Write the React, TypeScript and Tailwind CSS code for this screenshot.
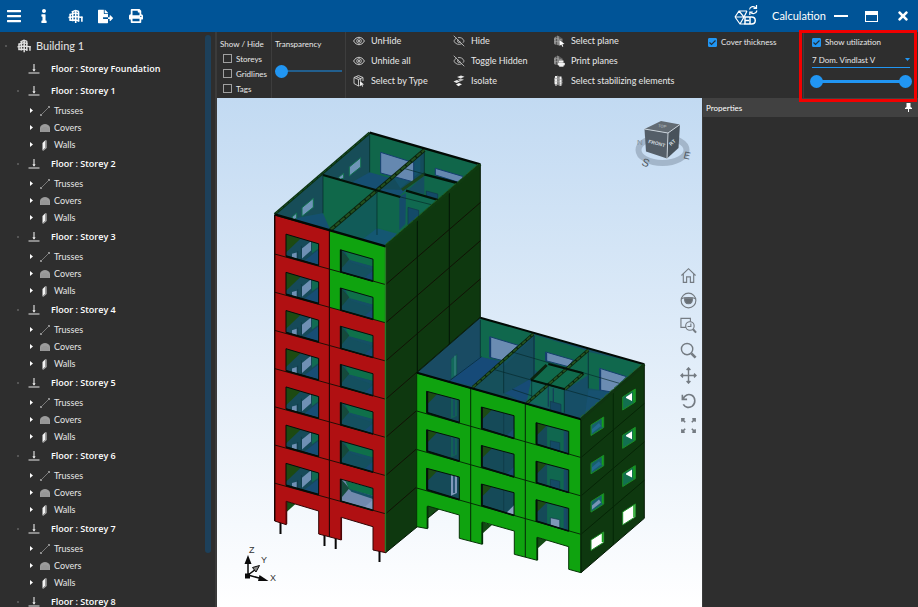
import { useState } from "react";
import type { ReactNode } from "react";
import { FaBars, FaInfo, FaFileExport, FaPrint, FaTimes } from "react-icons/fa";
import { EyeOff } from "lucide-react";

const storeys = [
  { name: "1", open: true },
  { name: "2", open: true },
  { name: "3", open: true },
  { name: "4", open: true },
  { name: "5", open: true },
  { name: "6", open: true },
  { name: "7", open: true },
  { name: "8", open: false },
];

/* ---------- small icons ---------- */

function BuildingIcon({ className = "" }: { className?: string }) {
  return (
    <svg className={className} viewBox="0 0 16 16" fill="none" stroke="currentColor">
      <path strokeWidth="1.7" d="M5 2.5v10.500M8.200 1v14M11.200 2.500v11M2.300 5v7M14.800 8v5.500" />
      <path strokeWidth="1.5" d="M2 6l6-1.800 4 1.300M.5 9l7.500-1 7.500 1M1.500 12l6.500-.3 4 1M4 3.2L8 1.500l3.500 1.200" />
    </svg>
  );
}

function FloorIcon() {
  return (
    <svg className="h-3 w-3" viewBox="0 0 12 12" stroke="#e8e8e8" fill="none">
      <path d="M6 1v7M.5 10h11" strokeWidth="1.1" />
      <path d="M4.800 6.500L6 8.300l1.200-1.800z" fill="#e8e8e8" strokeWidth=".5" />
    </svg>
  );
}

function TrussIcon() {
  return (
    <svg className="h-3 w-3" viewBox="0 0 12 12" fill="#8d8d8d">
      <path d="M2 10l8-8" stroke="#8d8d8d" strokeWidth=".8" />
      <rect x="1" y="9" width="2" height="2" />
      <rect x="9" y="1" width="2" height="2" />
    </svg>
  );
}

function CoverIcon() {
  return (
    <svg className="h-3 w-3" viewBox="0 0 12 12">
      <path d="M1 10V5.5C1.500 3.500 4 2 6 2s4.500 1.500 5 3.500V10z" fill="#9c9c9c" />
      <path d="M3 10V6M5 10V5M7 10V5M9 10V6" stroke="#858585" strokeWidth=".5" />
    </svg>
  );
}

function WallIcon() {
  return (
    <svg className="h-3 w-3" viewBox="0 0 12 12">
      <path d="M3.500 4L6.500 1v7.500l-3 3z" fill="#f4f4f4" />
      <path d="M6.500 1l1.200.4v7.500l-3.200 2.900-1-.3 3-3z" fill="#a8a8a8" />
    </svg>
  );
}

function EyeIcon() {
  return (
    <svg className="h-3 w-3" viewBox="0 0 12 12" fill="none" stroke="#dcdcdc">
      <path d="M.6 6C2 3.500 4 2.300 6 2.300S10 3.500 11.400 6C10 8.500 8 9.700 6 9.700S2 8.500.6 6z" strokeWidth=".9" />
      <circle cx="6" cy="6" r="2.300" strokeWidth=".8" />
      <circle cx="6" cy="6" r="1" fill="#dcdcdc" stroke="none" />
    </svg>
  );
}

function SelectTypeIcon() {
  return (
    <svg className="h-3 w-3" viewBox="0 0 12 12" fill="none" stroke="#d4d4d4" strokeWidth=".9">
      <path d="M6.500 10.500L5.500 11 1 8.500v-6L5.500.6 10 2.500V6M1 2.500l4.500 2 4.500-2M5.500 4.500V11M3.200 1.600l4.500 2v2.800" />
      <path d="M7 6l4 3.500-1.800.2.900 1.600-.8.400-.9-1.600L7 11.300z" fill="#f0f0f0" stroke="none" />
    </svg>
  );
}

function IsolateIcon() {
  return (
    <svg className="h-3 w-3" viewBox="0 0 12 12">
      <path d="M4 2l4-1.500 3.500 1.300-4 1.700z" fill="#e8e8e8" />
      <path d="M5 4.500L8 3.500l3 1.200-4 1.800z" fill="#b8b8b8" />
      <path d="M.5 6.500L4 5l3 1.400L3.500 8z" fill="#e8e8e8" />
      <path d="M3 9.500l3-1.500 3 1.300-3.500 2z" fill="#f5f5f5" />
    </svg>
  );
}

function PlaneIcon({ kind }: { kind: "select" | "print" | "stabilize" }) {
  return (
    <svg className="h-3 w-3" viewBox="0 0 12 12">
      <path d="M1 3l2.500-2v9L1 9zM4 .6L6.500 1.500v9L4 10z" fill="#858585" />
      <path d="M7 2l2.500 1.500v6L7 10.500z" fill="#626262" />
      <path d="M1 4.500L3.500 3.500l6 1.500M1 7l2.500-.5 6 1" stroke="#b0b0b0" strokeWidth=".6" fill="none" />
      {kind === "select" && <path d="M6.500 5l5 4-2.200.2 1 2.200-1 .4-1-2.200-1.800 1.200z" fill="#fff" />}
      {kind === "print" && (
        <g fill="#f2f2f2">
          <rect x="6" y="5.500" width="4.500" height="2" />
          <rect x="5" y="7.800" width="6.800" height="2.700" rx=".8" />
          <rect x="6.200" y="9.700" width="4.300" height="2" />
        </g>
      )}
      {kind === "stabilize" && (
        <path d="M3 1v9.500M7.500 1.500V11" stroke="#efefef" strokeWidth="2" strokeDasharray="2.500 .4" />
      )}
    </svg>
  );
}

function CalculationIcon() {
  return (
    <svg className="h-6 w-6" viewBox="0 0 24 24" fill="none" stroke="#fff" strokeWidth="1.200">
      <path d="M1 13l4-6h8M1 13l5 7h4M1 13h9M5 7l5 6-4 7M13 7l-3 6" />
      <path strokeWidth="1.500" d="M11 20v-7h5M11 16.500h4M16 20v-7h1.500c5 0 5 7 0 7zM10 20h6" />
      <path d="M15.500 5.500C16 2.500 20 1.500 22 4M22.500 1v3.300h-3M23 6.500c-.8 3.500-4.800 4-6.700 1.700M15.800 11V8h3" />
    </svg>
  );
}

/* ---------- tree ---------- */

function TreeLeaf({ icon, label }: { icon: ReactNode; label: string }) {
  return (
    <li className="flex h-[17px] items-center pl-[30px]">
      <svg className="mr-[6px] h-[5px] w-[3px]" viewBox="0 0 3 5">
        <path d="M0 0l3 2.500L0 5z" fill="#fff" />
      </svg>
      {icon}
      <span className="ml-[3px] text-[9px]">{label}</span>
    </li>
  );
}

function FloorRow({ name, expandable = true }: { name: string; expandable?: boolean }) {
  return (
    <div className="flex h-[22px] items-center pl-[17px]">
      <span className={`mr-[9px] h-[2px] w-[2px] ${expandable ? "bg-[#555]" : ""}`}></span>
      <FloorIcon />
      <span className="ml-[11px] font-['Open_Sans','Noto_Sans',sans-serif] text-[9px] font-semibold text-white">
        Floor : Storey {name}
      </span>
    </div>
  );
}

function Sidebar() {
  return (
    <aside className="flex w-[217px] shrink-0 overflow-hidden border-r-2 border-[#3b3b3b] bg-[#2e2e2e]">
      <div className="min-w-0 flex-1 overflow-hidden pt-[2px] whitespace-nowrap text-[#e6e6e6]">
        <div className="flex h-6 items-center pl-[5px]">
          <span className="mr-[10px] h-[2px] w-[2px] bg-[#555]"></span>
          <BuildingIcon className="h-[14px] w-[14px] text-[#e0e0e0]" />
          <span className="ml-[5px] text-[11px]">Building 1</span>
        </div>
        <FloorRow name="Foundation" expandable={false} />
        {storeys.map((s) => (
          <div key={s.name}>
            <FloorRow name={s.name} />
            {s.open && (
              <ul>
                <TreeLeaf icon={<TrussIcon />} label="Trusses" />
                <TreeLeaf icon={<CoverIcon />} label="Covers" />
                <TreeLeaf icon={<WallIcon />} label="Walls" />
              </ul>
            )}
          </div>
        ))}
      </div>
      <div className="mt-[3px] mr-1 mb-[54px] w-[6px] rounded-sm bg-[#1d405a]"></div>
    </aside>
  );
}

/* ---------- toolbar ---------- */

function ToolButton({ icon, label }: { icon: ReactNode; label: string }) {
  return (
    <button className="flex h-5 items-center gap-[6px] text-left text-[9px] hover:text-white">
      {icon}
      {label}
    </button>
  );
}

function EmptyCheck({ label }: { label: string }) {
  return (
    <label className="flex h-[15px] items-center gap-1 text-[8px]">
      <input type="checkbox" className="h-[9px] w-[9px] appearance-none border border-[#a0a0a0] checked:bg-[#2196f3]" />
      {label}
    </label>
  );
}

function BlueCheck({ label }: { label: string }) {
  const [checked, setChecked] = useState(true);
  return (
    <label className="flex items-center gap-1 text-[8px]">
      <span className="grid">
        <input
          type="checkbox"
          checked={checked}
          onChange={() => setChecked(!checked)}
          className="col-start-1 row-start-1 h-[9px] w-[9px] appearance-none rounded-[1px] border border-[#2196f3] checked:bg-[#2196f3]"
        />
        <svg className="pointer-events-none col-start-1 row-start-1 h-[9px] w-[9px]" viewBox="0 0 9 9">
          <path d="M1.500 4.500l2 2 4-4" fill="none" stroke="#20303c" strokeWidth="1.200" />
        </svg>
      </span>
      {label}
    </label>
  );
}

const thumb =
  "appearance-none bg-transparent [&::-webkit-slider-thumb]:h-[13px] [&::-webkit-slider-thumb]:w-[13px] [&::-webkit-slider-thumb]:appearance-none [&::-webkit-slider-thumb]:rounded-full [&::-webkit-slider-thumb]:bg-[#2196f3]";

function Toolbar() {
  return (
    <div className="flex h-[66px] shrink-0 bg-[#2e2e2e] whitespace-nowrap text-[#e8e8e8]">
      <div className="w-[55px] border-r border-[#3d3d3d] pt-[6px] pl-[3px]">
        <div className="h-[13px] text-[8px] leading-3">Show / Hide</div>
        <div className="pl-[3px]">
          <EmptyCheck label="Storeys" />
          <EmptyCheck label="Gridlines" />
          <EmptyCheck label="Tags" />
        </div>
      </div>
      <div className="w-[74px] border-r border-[#3d3d3d] pt-[6px] pl-[3px]">
        <label htmlFor="transparency" className="block h-[14px] text-[8px] leading-3">
          Transparency
        </label>
        <div className="mt-3 flex h-[14px] w-[67px] items-center">
          <input
            id="transparency"
            type="range"
            defaultValue={0}
            className={`w-full ${thumb} [&::-webkit-slider-runnable-track]:bg-[linear-gradient(#225f8e,#225f8e)] [&::-webkit-slider-runnable-track]:bg-[length:100%_2px] [&::-webkit-slider-runnable-track]:bg-center [&::-webkit-slider-runnable-track]:bg-no-repeat`}
          />
        </div>
      </div>
      <div className="-mt-px flex pl-[7px]">
        <div className="w-[100px]">
          <ToolButton icon={<EyeIcon />} label="UnHide" />
          <ToolButton icon={<EyeIcon />} label="Unhide all" />
          <ToolButton icon={<SelectTypeIcon />} label="Select by Type" />
        </div>
        <div className="w-[100px]">
          <ToolButton icon={<EyeOff size={12} strokeWidth={1.8} color="#bdbdbd" />} label="Hide" />
          <ToolButton icon={<EyeOff size={12} strokeWidth={1.8} color="#bdbdbd" />} label="Toggle Hidden" />
          <ToolButton icon={<IsolateIcon />} label="Isolate" />
        </div>
        <div>
          <ToolButton icon={<PlaneIcon kind="select" />} label="Select plane" />
          <ToolButton icon={<PlaneIcon kind="print" />} label="Print planes" />
          <ToolButton icon={<PlaneIcon kind="stabilize" />} label="Select stabilizing elements" />
        </div>
      </div>
      <div className="ml-auto flex">
        <div className="w-[95px] pt-1">
          <BlueCheck label="Cover thickness" />
        </div>
        <div className="relative w-[115px] border-l border-[#3d3d3d] pt-1 pr-2 pl-2">
          <BlueCheck label="Show utilization" />
          <div className="mt-1 grid border-b border-[#2196f3]">
            <select
              aria-label="Load case"
              className="col-start-1 row-start-1 h-[15px] appearance-none bg-transparent text-[8px] outline-none"
            >
              <option>7 Dom. Vindlast V</option>
            </select>
            <svg
              className="pointer-events-none col-start-1 row-start-1 h-[3px] w-[5px] self-center justify-self-end"
              viewBox="0 0 5 3"
            >
              <path d="M0 0h5L2.500 3z" fill="#2196f3" />
            </svg>
          </div>
          <div className="-mx-[2px] mt-[6px] grid h-[14px] items-center">
            <div className="col-start-1 row-start-1 mx-1 h-[3px] bg-[#2196f3]"></div>
            <input
              type="range"
              aria-label="Minimum utilization"
              defaultValue={0}
              className={`pointer-events-none col-start-1 row-start-1 w-full ${thumb} [&::-webkit-slider-thumb]:pointer-events-auto`}
            />
            <input
              type="range"
              aria-label="Maximum utilization"
              defaultValue={100}
              className={`pointer-events-none col-start-1 row-start-1 w-full ${thumb} [&::-webkit-slider-thumb]:pointer-events-auto`}
            />
          </div>
          <div className="pointer-events-none absolute -top-[2px] right-px -left-[5px] z-10 h-[72px] border-3 border-[#f20000]"></div>
        </div>
      </div>
    </div>
  );
}

/* ---------- 3D model ---------- */

const PITCH = 38.2;
const RED = "#b01012";
const GREEN = "#0fa30f";
const DARK = "#0e380f";

function TowerRoof() {
  return (
    <g transform="translate(262 125) scale(.33333)">
      <path d="M38 268L323 23 655 118 371 364z" fill="#10664a" />
      {/* outer left wall and floors */}
      <path d="M38 268L323 23V145L183 265 90 282z" fill="#174d58" />
      <path d="M323 142L450 178 410 215 344 195 270 172z" fill="#164f72" />
      <path d="M90 282L183 264 250 284 345 315 405 328 371 364z" fill="#155070" />
      <path d="M183 150V265L205 315 345 196z" fill="#10684a" />
      <path d="M205 312L345 198V315L300 344z" fill="#115b58" />
      <path d="M345 198L412 215V322L345 308z" fill="#10664d" />
      <path d="M345 310L405 326 371 364 300 344z" fill="#145772" />
      {/* inner rooms */}
      <path d="M412 215L432 205V295L412 315z" fill="#154b6a" />
      <path d="M432 200L522 225 430 302z" fill="#106950" />
      <path d="M438 195L487 150V208z" fill="#154e60" />
      <path d="M487 78V150L425 195 345 192z" fill="#144c5c" />
      <path d="M390 150l85-60v50l-60 50z" fill="#15536a" />
      {/* openings */}
      <path d="M356 82L455 113V171L356 144z" fill="#6588b0" stroke="#153e70" strokeWidth="3" />
      <path d="M520 130L605 155 590 172 520 150z" fill="#6588b0" stroke="#153e70" strokeWidth="3" />
      <path d="M262 126L296 98V126L262 153zM120 248l34-28v27l-34 27zM230 157l15-12v14l-10 4zM90 276l14-12v15l-10 6z" fill="#6e95b7" stroke="#12704f" strokeWidth="3" />
      <path d="M438 247L470 256V279L438 300zM493 198l34 9v14l-34-8z" fill="#134a68" stroke="#12384c" strokeWidth="2" />
      {/* partition tops */}
      <path d="M205 315L487 75" stroke="#0c240e" strokeWidth="11" />
      <path d="M205 315L487 75" stroke="#24501f" strokeWidth="6" strokeDasharray="16 4" />
      <path d="M420 195L490 145" stroke="#1a4520" strokeWidth="9" />
      <path d="M183 150L415 216M432 197L528 225M487 148L586 174" stroke="#031208" strokeWidth="7" />
      <path d="M412 215L520 242M425 130l65 18M345 198V330M323 30V142M183 150V265M487 80V150" stroke="#052a26" strokeWidth="2" fill="none" />
      <path d="M38 268L323 23" stroke="#0a2f12" strokeWidth="8" />
      <path d="M38 268L323 23" stroke="#1b5224" strokeWidth="3" strokeDasharray="14 5" />
      <path d="M323 23L655 118M38 268L371 364" stroke="#020a04" strokeWidth="7" />
      <path d="M371 364L655 118" stroke="#0f3a10" strokeWidth="9" />
      <path d="M371 358L648 118" stroke="#1f5f1f" strokeWidth="3" strokeDasharray="14 5" />
    </g>
  );
}

function TowerWindowLeft({ row }: { row: number }) {
  return (
    <g transform={`translate(262 ${260 + (row - 1) * PITCH}) scale(.33333)`}>
      <path d="M72 37L170 66V131L72 103z" fill="#164a59" />
      <path d="M72 37L116 50 72 92z" fill="#1d4a12" />
      <path d="M120 80L147 58V86L120 110zM90 96L104 92V112L90 108z" fill="#6f90b4" />
      <path d="M150 60L170 66V80L150 94z" fill="#116b52" />
      <path d="M125 118L170 84V131z" fill="#174d74" />
      <path d="M107 88v24M118 72v44" stroke="#123b4a" strokeWidth="3" />
      <path d="M72 37L170 66V131L72 103z" fill="none" stroke="#050d08" strokeWidth="3" />
      <path d="M72 103L170 131" stroke="#050d08" strokeWidth="5" />
    </g>
  );
}

function TowerWindowRight({ row }: { row: number }) {
  return (
    <g transform={`translate(262 ${260 + (row - 1) * PITCH}) scale(.33333)`}>
      <path d="M235 84L333 112V178L235 150z" fill={row === 6 ? "#7089ad" : "#14505f"} />
      <path d="M250 90L333 112V134L262 116z" fill="#0f704a" />
      <path d="M240 87L262 112 240 138z" fill="#154a3c" />
      <path d="M262 114L333 134V144L268 122z" fill="#155065" />
      <path d="M305 170L333 146V178z" fill={row === 6 ? "#8098bb" : "#184c73"} />
      <path d="M235 84L333 112V178L235 150z" fill="none" stroke="#04140c" strokeWidth="3" />
      <path d="M237 84V150M235 150L333 178" stroke="#04100a" strokeWidth="5" />
    </g>
  );
}

function Tower() {
  const rows = [0, 1, 2, 3, 4, 5, 6];
  return (
    <g>
      <path d="M280.500 522v12M324.500 534v12M335.700 538v11M379.500 550v12" stroke="#080808" strokeWidth="2" />
      <path d="M385.700 246.300L480.300 164.300V475L385.700 552.700z" fill={DARK} stroke="#051a06" />
      <path d="M286 501l9.500 3-9.500 8.500z" fill="#155018" />
      <path
        d="M274.700 215L385.700 246.300V552.700L373 550V526.700L341.300 517.300V540L318.700 534V511L286.300 501.300V524.700L274.700 521z"
        fill={RED}
        stroke="#300505"
      />
      <path d="M286.500 524V501.500M341.300 540V517.500" stroke="#4d0607" strokeWidth="1.500" />
      <path d="M329.500 231.300L385.700 246.300V323L329.500 307.500z" fill={GREEN} />
      {rows.map((r) => (
        <path
          key={r}
          d={`M274.700 ${254 + r * PITCH}L385.700 ${284.600 + r * PITCH}L480.300 ${202.600 + r * PITCH}`}
          fill="none"
          stroke="#120d05"
          strokeWidth=".9"
        />
      ))}
      <path d="M329.400 231V537" stroke="#210606" strokeWidth="1.100" />
      <path d="M417.300 219V525M449.300 191V500" stroke="#031406" />
      <path d="M385.500 247V552" stroke="#267526" strokeWidth="1.500" />
      <path d="M274.700 215V521" stroke="#100202" strokeWidth="1.200" />
      {rows.map((r) => (
        <g key={r}>
          <TowerWindowLeft row={r} />
          <TowerWindowRight row={r} />
        </g>
      ))}
      <TowerRoof />
    </g>
  );
}

function AnnexRoof() {
  return (
    <g transform="translate(405 310) scale(.33333)">
      <path d="M36 188L226 23 718 163 528 328z" fill="#155064" />
      <path d="M36 188L226 23V142L130 215z" fill="#194b63" />
      <path d="M226 23L385 70 300 155 226 142zM390 75L548 122V205L480 240 390 180zM550 125L718 163 620 245 550 235z" fill="#10684d" />
      <path d="M130 212L226 140 292 155 203 228z" fill="#164a78" />
      <path d="M296 170L387 80V205L296 250z" fill="#164d5c" />
      <path d="M300 250L380 205 378 262 350 275z" fill="#174b76" />
      <path d="M203 230L296 165V250L361 280z" fill="#16505b" />
      <path d="M430 165L530 190V205L480 238 380 210z" fill="#106a4c" />
      <path d="M378 212L478 238V308L365 276z" fill="#12665a" />
      <path d="M480 240L550 195V310L528 328 480 312z" fill="#164e66" />
      <path d="M430 225v65M445 235v55" stroke="#143f57" strokeWidth="4" />
      <path d="M550 240L620 245 540 315z" fill="#175170" />
      <path d="M254 80L340 106 290 151 254 142zM422 126L505 150 490 170 422 152zM584 175L665 200 620 246 584 240z" fill="#6b8cb2" stroke="#143f6b" strokeWidth="3" />
      <path d="M256 82v60M424 128v26M586 178v62" stroke="#153e70" strokeWidth="5" />
      <path d="M138 147L156 132V192L138 208z" fill="#12695a" stroke="#174d58" strokeWidth="2" />
      <path d="M150 137v60" stroke="#5d96a6" strokeWidth="2" />
      <path d="M436 274L468 283V307L436 300z" fill="#144764" stroke="#12384c" strokeWidth="2" />
      <path d="M226 30V142M296 155V250M387 78V200M550 125V235M478 238V308M380 210v60M130 215l100-75M265 178L590 270M325 127L650 222M322 238l60 20" stroke="#06292c" strokeWidth="2" fill="none" />
      <path d="M203 232L385 72M365 280L550 120M425 165L378 210M480 238L535 190" stroke="#0c240e" strokeWidth="9" />
      <path d="M203 232L385 72M365 280L550 120M480 238L535 190" stroke="#255420" strokeWidth="5" strokeDasharray="14 4" />
      <path d="M378 210L480 238M430 162L535 190" stroke="#031208" strokeWidth="6" />
      <path d="M36 188L226 23" stroke="#082514" strokeWidth="3" />
      <path d="M226 23L718 163M36 188L528 328" stroke="#020a04" strokeWidth="6" />
      <path d="M528 328L718 163" stroke="#0f3410" strokeWidth="9" />
      <path d="M526 322L710 163" stroke="#24632a" strokeWidth="3" strokeDasharray="14 5" />
    </g>
  );
}

/* facade opening of the annex, column 0 is the left one */
function AnnexWindow({ col, row }: { col: number; row: number }) {
  return (
    <g transform={`translate(${405 + col * 54.7} ${310 + col * 15.700 + row * 38.500}) scale(.33333)`}>
      <path d="M65 244L163 270V338L65 308z" fill="#154a58" />
      <path d="M65 244L96 253 65 284z" fill="#1c4c13" />
      {col === 0 && <path d="M138 264L156 268V318L138 326z" fill={row === 2 ? "#7e98b9" : "#126155"} />}
      {col === 0 && <path d="M147 266v52" stroke="#174967" strokeWidth="5" />}
      {col === 1 && <path d="M132 262v64" stroke="#0e3742" strokeWidth="2" />}
      {col === 1 && <path d="M140 330L163 308V338z" fill={row === 2 ? "#8ca2c2" : "#1a4c70"} />}
      {col === 2 && (
        <g>
          <path d="M98 255L150 267V332L98 318z" fill="#10674f" />
          <path d="M108 298L136 304V330L108 322z" fill={row === 2 ? "#7e97b6" : "#144a66"} stroke="#103b4e" strokeWidth="2" />
          <path d="M152 270v62" stroke="#174967" strokeWidth="8" />
        </g>
      )}
      <path d="M65 244L163 270V338L65 308z" fill="none" stroke="#041208" strokeWidth="3" />
      <path d="M67 244V308M65 308L163 338" stroke="#04100a" strokeWidth="5" />
    </g>
  );
}

function Annex() {
  const rows = [0, 1, 2];
  return (
    <g>
      <path d="M581 419.300L644.300 364.300V518.300L581 572.700z" fill={DARK} stroke="#051a06" />
      <path d="M427.500 506l9.500 3-9.500 9zM482 522l10 3-10 9zM537 537l10 3-10 9z" fill="#144a15" />
      <path
        d="M416.700 373L581 419.300V572.700L568.700 569.300V546.700L537.300 537.300V560.300L514.300 554.300V531L482.300 522V544.300L459.300 538.300V515L427.700 506V528.700L416.700 526.700z"
        fill={GREEN}
        stroke="#053306"
      />
      <path d="M427.500 528V506.500M482.300 544V522.500M537.300 560V537.500" stroke="#042e08" strokeWidth="1.700" />
      {rows.map((r) => (
        <path
          key={r}
          d={`M416.700 ${411 + r * 38.500}L581 ${457.500 + r * 38.400}L644.300 ${403.500 + r * 38.400}`}
          fill="none"
          stroke="#042105"
          strokeWidth=".9"
        />
      ))}
      <path d="M470.700 388V541M525.300 404V557M613.300 393V545" stroke="#042705" />
      <path d="M581 420V572" stroke="#0a280b" strokeWidth="1.500" />
      {rows.map((r) => [0, 1, 2].map((c) => <AnnexWindow key={`${r}-${c}`} col={c} row={r} />))}
      {/* gable windows */}
      {[0, 1, 2, 3].map((r) => (
        <g key={r} transform={`translate(0 ${r * 38.300})`}>
          <path d="M591 425L603.700 417V427.500L591 435.500z" fill={r === 3 ? "#fff" : "#16606b"} stroke="#1b8c24" />
          {r < 3 && <path d="M592 429l7-6 2 3-9 7z" fill={r === 2 ? "#7894b5" : "#246a91"} />}
          <path d="M622.700 397L635.300 389V402L622.700 410z" fill={r === 3 ? "#fff" : "#127050"} stroke="#1b8c24" />
          {r < 3 && <path d="M626 397l6-4v8l-6-3z" fill="#fff" />}
          <path d="M602.500 418v9M634 390v12" stroke="#14a01a" strokeWidth="1.500" />
        </g>
      ))}
      <AnnexRoof />
    </g>
  );
}

function NavCube() {
  return (
    <g fontFamily="Liberation Sans, sans-serif">
      <ellipse cx="662.500" cy="150" rx="24" ry="13" fill="none" stroke="#a3b6ca" strokeWidth="6" />
      <text x="637" y="145" fontSize="8" fill="#82909c">N</text>
      <path d="M644.500 129L661 121 680 124.500 668 133z" fill="#626b73" />
      <path d="M644.500 129L668 133 667 158.500 646 151.500z" fill="#545e68" />
      <path d="M668 133L680 124.500 678.500 148 667 158.500z" fill="#48525b" />
      <path d="M644.500 129L668 133 680 124.500M668 133L667 158.500" fill="none" stroke="#e1e9ef" strokeWidth=".8" />
      <text transform="translate(648 143) rotate(14)" fontSize="5" fontWeight="bold" fill="#d0d7dd">FRONT</text>
      <text transform="translate(658 127) rotate(9)" fontSize="4" fill="#c5ccd2">TOP</text>
      <text transform="translate(671 146) rotate(-42)" fontSize="5" fontWeight="bold" fill="#dce3e8">RT</text>
      <text transform="translate(641 165) rotate(20)" fontSize="11" fill="#4d565e">S</text>
      <text transform="translate(683 158) rotate(14)" fontSize="10" fill="#4d565e">E</text>
    </g>
  );
}

function Axes() {
  return (
    <g stroke="#0a0a0a" fill="#0a0a0a">
      <path d="M248 575V563M248 575l11 3M248 575l8-6" strokeWidth="1.500" fill="none" />
      <path d="M248 555l-3.500 9h7zM268.500 581l-9-6-1.500 6z" stroke="none" />
      <path d="M259.500 565.500l-7 2 3.500 4.500z" fill="#888" />
      <rect x="245" y="573.500" width="5" height="5" stroke="none" />
      <g stroke="none" fontFamily="Liberation Sans, sans-serif" fontSize="9" fill="#333">
        <text x="249" y="553">Z</text>
        <text x="261" y="563">Y</text>
        <text x="270" y="581">X</text>
      </g>
    </g>
  );
}

const viewTools: { label: string; icon: ReactNode }[] = [
  { label: "Home", icon: <path d="M1.500 9L9 1.800 16.500 9M3.500 7.500V16.300H7V10.500h4v5.800h3.500V7.500" /> },
  {
    label: "View",
    icon: (
      <>
        <circle cx="9" cy="9" r="7.800" />
        <path d="M1.500 7C5 5.500 13 5.500 16.500 7" />
        <path d="M5 6.500h8c.8 3.500-1 6-4 6s-4.800-2.500-4-6z" fill="#686f75" />
      </>
    ),
  },
  {
    label: "Zoom window",
    icon: (
      <>
        <path d="M6.500 11H1V1.500h10V5M8 10h3.500V7" />
        <circle cx="10.500" cy="9.500" r="4.500" />
        <path d="M13.800 13l3.200 3.500" strokeWidth="2.200" />
      </>
    ),
  },
  {
    label: "Zoom",
    icon: (
      <>
        <circle cx="7.500" cy="7.500" r="6" strokeWidth="1.500" />
        <path d="M12 12l4.500 4.500" strokeWidth="2.800" />
      </>
    ),
  },
  {
    label: "Pan",
    icon: (
      <path
        d="M9 1v16M1 9h16M7 3.200L9 1l2 2.200M7 14.800L9 17l2-2.200M3.200 7L1 9l2.200 2M14.800 7L17 9l-2.200 2"
        strokeWidth="1.500"
      />
    ),
  },
  {
    label: "Rotate",
    icon: (
      <path
        d="M2.500 3v4.800h5M3 7.500C5 3 9 1.500 12.500 3.500c4 2.300 4.300 8.500.5 11.500-3 2.200-7.500 1.700-9.500-1.800"
        strokeWidth="1.700"
      />
    ),
  },
  {
    label: "Zoom to fit",
    icon: (
      <path
        d="M2 5V2h3M2 2l3.500 3.500M13 2h3v3M16 2l-3.500 3.500M2 13v3h3M2 16l3.500-3.500M13 16h3v-3M16 16l-3.500-3.500"
        strokeWidth="1.700"
      />
    ),
  },
];

function Viewer() {
  return (
    <main className="relative min-w-0 flex-1 overflow-hidden bg-linear-to-b from-[#c2daf2] to-white">
      <svg className="h-full w-full" viewBox="217 98 485 509" role="img" aria-label="Building model">
        <Tower />
        <Annex />
        <NavCube />
        <Axes />
      </svg>
      <div className="absolute top-[165px] right-1 flex flex-col">
        {viewTools.map((t) => (
          <button key={t.label} title={t.label} className="flex h-[25px] w-[18px] items-center">
            <svg className="h-[17px] w-[17px]" viewBox="0 0 18 18" fill="none" stroke="#747b82" strokeWidth="1.200">
              {t.icon}
            </svg>
          </button>
        ))}
      </div>
    </main>
  );
}

function Properties() {
  return (
    <aside className="w-[216px] shrink-0 border-l border-[#3b3b3b] bg-[#2e2e2e]">
      <div className="flex h-[19px] items-center justify-between bg-[#414141] pr-[6px] pl-[3px] text-[8px] text-white">
        Properties
        <button title="Pin">
          <svg className="h-[9px] w-[7px]" viewBox="0 0 7 9">
            <path d="M1.500 0h4v4L7 5v1H4v3H3V6H0V5l1.500-1z" fill="#fff" />
          </svg>
        </button>
      </div>
    </aside>
  );
}

function Header() {
  return (
    <header className="flex h-8 shrink-0 items-center bg-[#005497] text-white">
      <button title="Menu" className="flex w-[28px] justify-center">
        <FaBars size={16} />
      </button>
      <button title="Info" className="flex w-[32px] justify-center">
        <FaInfo size={14} />
      </button>
      <button title="Building" className="flex w-[30px] justify-center">
        <BuildingIcon className="h-[15px] w-[15px]" />
      </button>
      <button title="Export" className="flex w-[31px] justify-center">
        <FaFileExport size={15} />
      </button>
      <button title="Print" className="flex w-[29px] justify-center">
        <FaPrint size={14} />
      </button>
      <div className="ml-auto flex items-center">
        <CalculationIcon />
        <span className="ml-[14px] text-[11px]">Calculation</span>
        <button title="Minimize" className="ml-2 flex h-4 w-[14px] items-center">
          <span className="h-[2px] w-full bg-white"></span>
        </button>
        <button title="Maximize" className="ml-[17px] h-[11px] w-[13px] border border-t-4 border-white"></button>
        <button title="Close" className="mr-2 ml-[18px]">
          <FaTimes size={14} />
        </button>
      </div>
    </header>
  );
}

export default function App() {
  return (
    <div className="flex h-screen flex-col overflow-hidden bg-[#2e2e2e] font-[Lato,'Open_Sans',sans-serif]">
      <Header />
      <div className="flex min-h-0 flex-1">
        <Sidebar />
        <div className="flex min-w-0 flex-1 flex-col">
          <Toolbar />
          <div className="flex min-h-0 flex-1">
            <Viewer />
            <Properties />
          </div>
        </div>
      </div>
    </div>
  );
}
